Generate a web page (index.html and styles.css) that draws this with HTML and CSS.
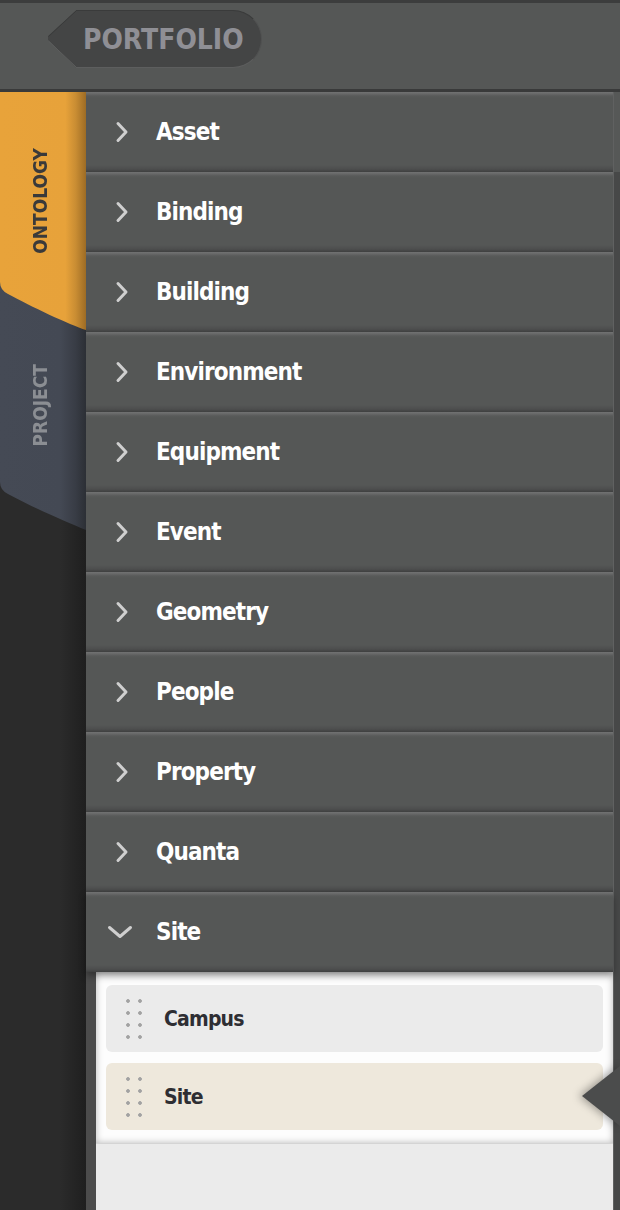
FILE: index.html
```html
<!DOCTYPE html>
<html lang="en">
<head>
    <meta charset="UTF-8">
    <meta name="viewport" content="width=device-width, initial-scale=1.0">
    <title>Ontology</title>
    <link rel="stylesheet" href="styles.css">
</head>
<body>

    <header class="topbar">
        <a class="back" href="#">
            <svg class="back-tip" width="30" height="58" viewBox="0 0 30 58">
                <polygon points="30.5,0 2,26 2,30 30.5,58" fill="#444545"/>
                <polyline points="30.5,0.5 2.5,26.5" stroke="#3a3b3b" stroke-width="1" fill="none"/>
                <polyline points="2.5,31 30.5,57.5" stroke="#5d5e5e" stroke-width="1" fill="none"/>
            </svg>
            <span class="back-label">PORTFOLIO</span>
        </a>
    </header>

    <div class="main">
        <aside class="rail">
            <div class="tab tab-ontology"><span>ONTOLOGY</span></div>
            <div class="tab tab-project"><span>PROJECT</span></div>
        </aside>

        <div class="tree">
            <div class="row"><svg class="chev" width="14" height="22" viewBox="0 0 14 22"><polyline points="3,2.5 11,11 3,19.5"/></svg><span>Asset</span></div>
            <div class="row"><svg class="chev" width="14" height="22" viewBox="0 0 14 22"><polyline points="3,2.5 11,11 3,19.5"/></svg><span>Binding</span></div>
            <div class="row"><svg class="chev" width="14" height="22" viewBox="0 0 14 22"><polyline points="3,2.5 11,11 3,19.5"/></svg><span>Building</span></div>
            <div class="row"><svg class="chev" width="14" height="22" viewBox="0 0 14 22"><polyline points="3,2.5 11,11 3,19.5"/></svg><span>Environment</span></div>
            <div class="row"><svg class="chev" width="14" height="22" viewBox="0 0 14 22"><polyline points="3,2.5 11,11 3,19.5"/></svg><span>Equipment</span></div>
            <div class="row"><svg class="chev" width="14" height="22" viewBox="0 0 14 22"><polyline points="3,2.5 11,11 3,19.5"/></svg><span>Event</span></div>
            <div class="row"><svg class="chev" width="14" height="22" viewBox="0 0 14 22"><polyline points="3,2.5 11,11 3,19.5"/></svg><span>Geometry</span></div>
            <div class="row"><svg class="chev" width="14" height="22" viewBox="0 0 14 22"><polyline points="3,2.5 11,11 3,19.5"/></svg><span>People</span></div>
            <div class="row"><svg class="chev" width="14" height="22" viewBox="0 0 14 22"><polyline points="3,2.5 11,11 3,19.5"/></svg><span>Property</span></div>
            <div class="row"><svg class="chev" width="14" height="22" viewBox="0 0 14 22"><polyline points="3,2.5 11,11 3,19.5"/></svg><span>Quanta</span></div>
            <div class="row open"><svg class="chev-down" width="26" height="14" viewBox="0 0 26 14"><polyline points="2.5,2.5 13,11.5 23.5,2.5"/></svg><span>Site</span></div>

            <div class="children">
                <div class="child-list">
                    <div class="child"><span class="grip"></span><span>Campus</span></div>
                    <div class="child selected">
                        <span class="grip"></span><span>Site</span>
                        <svg class="pointer" width="40" height="64" viewBox="0 0 40 64"><polygon points="2,32 40,2 40,62" fill="#4b4c4c"/></svg>
                    </div>
                </div>
            </div>
        </div>

        <div class="track"><div class="thumb"></div></div>
    </div>

</body>
</html>
```

FILE: styles.css
```css
body {
    margin: 0;
    width: 620px;
    height: 1210px;
    overflow: hidden;
    background: #2b2b2b;
    font-family: "DejaVu Sans Condensed", "Liberation Sans", sans-serif;
    font-weight: bold;
}
.topbar {
    height: 79px;
    border-top: 3px solid #3c3d3d;
    border-bottom: 3px solid #393a3a;
    background: #555756;
    display: flex;
    align-items: flex-start;
    padding: 7px 0 0 46px;
}
.back {
    display: flex;
    height: 58px;
    text-decoration: none;
}
.back-tip {
    display: block;
}
.back-label {
    display: flex;
    align-items: center;
    height: 58px;
    box-sizing: border-box;
    padding: 0 17px 0 7px;
    background: #444545;
    border-radius: 0 29px 29px 0;
    border-top: 1px solid #3a3b3b;
    border-right: 1px solid #505151;
    border-bottom: 1px solid #5d5e5e;
    color: #8f8f95;
    font-size: 28px;
}
.main {
    display: flex;
    height: 1118px;
}
.rail {
    width: 86px;
    flex: none;
    background: linear-gradient(to right, #2b2b2b 70%, #1f1f1f 100%);
}
.tab {
    display: flex;
    align-items: center;
    justify-content: center;
    font-size: 19px;
    position: relative;
}
.tab span {
    writing-mode: vertical-rl;
    transform: rotate(180deg);
    margin-left: -6px;
}
.tab-ontology {
    height: 238px;
    z-index: 2;
    padding-bottom: 20px;
    box-sizing: border-box;
    color: #3a3a3a;
    background: linear-gradient(to right, #e8a33a 0, #e7a23a 76%, #c98d33 88%, #9d6c25 100%);
    clip-path: path('M0 0 H86 V238 C70 233 30 214 8 202 Q0 198 0 190 Z');
}
.tab-project {
    height: 260px;
    margin-top: -60px;
    z-index: 1;
    padding-top: 42px;
    padding-bottom: 32px;
    box-sizing: border-box;
    color: #8b8e93;
    background: linear-gradient(to right, #454a55 0, #444954 70%, #383c45 88%, #2c2f35 100%);
    clip-path: path('M0 0 H86 V260 C66 252 30 236 8 224 Q0 220 0 212 Z');
}
.tree {
    flex: 1;
    display: flex;
    flex-direction: column;
    background: #4c4c4c;
    border-right: 1px solid #606161;
}
.row {
    height: 80px;
    flex: none;
    display: flex;
    align-items: center;
    padding-left: 29px;
    background: linear-gradient(to bottom, #717272 0, #666767 2px, #585a59 4px, #555756 6px, #555756 73px, #4d4e4e 77px, #3f4040 80px);
    color: #ffffff;
    font-size: 24px;
    letter-spacing: -0.9px;
}
.row span {
    margin-left: 27px;
}
.chev polyline,
.chev-down polyline {
    fill: none;
    stroke: #cfcfcf;
    stroke-width: 3;
    stroke-linecap: round;
    stroke-linejoin: round;
}
.row.open {
    padding-left: 21px;
    position: relative;
    z-index: 2;
    box-shadow: 0 4px 7px rgba(0, 0, 0, 0.35);
}
.row.open span {
    margin-left: 23px;
}
.children {
    flex: 1;
    margin-left: 10px;
    background: #ebebeb;
}
.child-list {
    display: flex;
    flex-direction: column;
    gap: 11px;
    padding: 13px 10px 13px 10px;
    background: #fdfdfd;
    box-shadow: inset 0 0 7px rgba(0, 0, 0, 0.28);
    border-bottom: 1px solid #d4d4d4;
}
.child {
    height: 67px;
    display: flex;
    align-items: center;
    padding-left: 16px;
    border-radius: 6px;
    background: #ebebeb;
    color: #2e2e33;
    font-size: 21px;
    letter-spacing: -0.8px;
    position: relative;
}
.child.selected {
    background: #eee8dc;
}
.grip {
    width: 24px;
    height: 48px;
    margin-right: 18px;
    background: radial-gradient(circle at 6px 6px, #a2a2a2 0, #a2a2a2 1.5px, transparent 2.2px) 0 0 / 12px 12px;
}
.pointer {
    position: absolute;
    right: -17px;
    top: 1px;
    filter: drop-shadow(-3px 0 4px rgba(0, 0, 0, 0.35));
}
.track {
    width: 6px;
    flex: none;
    background: #474848;
}
.thumb {
    height: 80px;
    background: #565857;
}
```
